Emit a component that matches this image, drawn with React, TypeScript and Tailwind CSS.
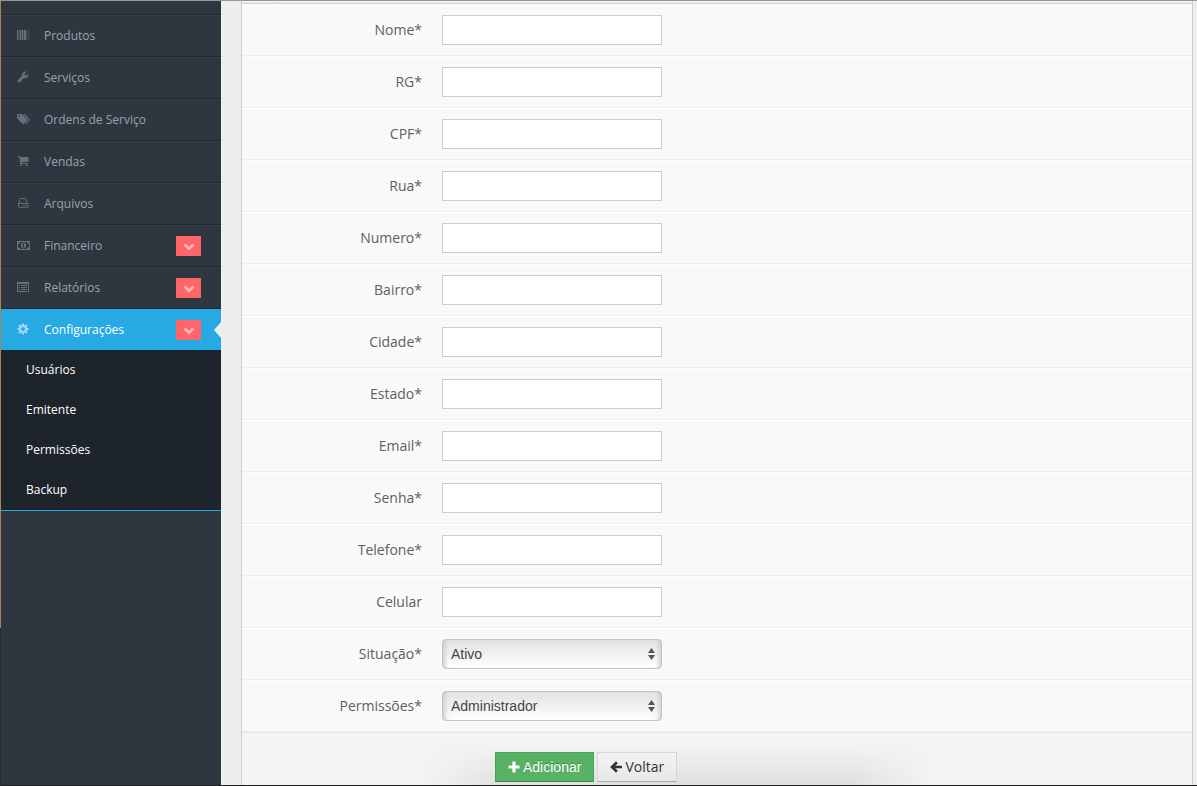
import type { ReactNode } from "react";

type MenuItem = { label: string; icon: ReactNode; dropdown?: boolean };

function BarcodeIcon() {
  return (
    <svg width="12" height="12" viewBox="0 0 12 12" fill="currentColor" shapeRendering="crispEdges">
      <path d="M0 1h1v10H0zM3 1h1v10H3zM5 1h1v10H5zM7 1h2v10H7z" />
      <path d="M1 1h2v10H1zM4 1h1v10H4zM6 1h1v10H6zM9 1h1v10H9zM11 1h1v10h-1z" opacity=".4" />
    </svg>
  );
}

function WrenchIcon() {
  return (
    <svg width="12" height="12" viewBox="0 0 12 12" fill="currentColor">
      <path d="M6.900 7.100 2.800 11.200Q2 11.900 1.200 11.200L.8 10.800Q.1 10 .8 9.200L4.900 5.100Q4.500 2.500 6.300 1.200 7.800.2 9.900.8L7.800 2.400v1.400l1.300.7 2.600-1.400q.3 2-1.100 3.200-1.600 1.400-3.700.8z" />
    </svg>
  );
}

function TagsIcon() {
  return (
    <svg width="13" height="12" viewBox="0 0 13 12" fill="currentColor">
      <path
        fillRule="evenodd"
        d="M0 1.900Q0 1 .9 1h3.300q.8 0 1.400.6l4.700 4.600q.6.600 0 1.200l-3.500 3.500q-.6.600-1.200 0L.9 6.200Q0 5.400 0 4.600zM2.200 2.200a.9.9 0 1 0 0 1.800.9.9 0 0 0 0-1.800z"
      />
      <path d="M6.200 1h.9q.8 0 1.400.6l4.100 4.600q.6.600 0 1.200L9 11q-.6.600-1.200.1l3.500-3.600q.5-.7 0-1.300z" />
    </svg>
  );
}

function CartIcon() {
  return (
    <svg width="12" height="12" viewBox="0 0 12 12" fill="currentColor">
      <path d="M.6 1h2.100l.5 1h8q.4 0 .4.500v3.700q0 .5-.5.500L4.200 7.300l.2.800h6.100v.9H3.300L2.300 2H.6z" />
      <circle cx="4.200" cy="10.300" r="1" />
      <circle cx="9.800" cy="10.300" r="1" />
    </svg>
  );
}

function HddIcon() {
  return (
    <svg width="12" height="12" viewBox="0 0 12 12" fill="none" stroke="currentColor">
      <path d="M1.500 6.500 2.900 2.300Q3.100 1.500 3.900 1.500h4.200q.8 0 1 .8L10.500 6.500h-9Q1.500 6.500 1.500 7v2.500q0 .8.800.8h7.900q.8 0 .8-.8V7q0-.5-.5-.5" />
      <path d="M6.500 8.500h1M8.500 8.500h1" />
    </svg>
  );
}

function MoneyIcon() {
  return (
    <svg width="13" height="12" viewBox="0 0 13 12" fill="currentColor">
      <path
        fillRule="evenodd"
        d="M0 2h13v9H0zM3.200 3Q3 4.700 1 5v3q2 .3 2.200 2h6.600Q10 8.300 12 8V5q-2-.3-2.200-2z"
      />
      <path
        fillRule="evenodd"
        d="M6.500 3.500c1.600 0 2.600 1.300 2.600 3s-1 3-2.600 3-2.600-1.300-2.600-3 1-3 2.600-3zM5.900 4.600l-.9.800.4.600.5-.3v2h-.7v.8h2.600v-.8H7V4.600z"
      />
    </svg>
  );
}

function ListIcon() {
  return (
    <svg width="12" height="12" viewBox="0 0 12 12" fill="none" stroke="currentColor" shapeRendering="crispEdges">
      <path d="M.5 1.500h11v9H.5z" />
      <path d="M0 2.500h12" />
      <path d="M2 4.500h1M4 4.500h6M2 6.500h1M4 6.500h6M2 8.500h1M4 8.500h6" />
    </svg>
  );
}

function GearIcon() {
  return (
    <svg width="12" height="12" viewBox="0 0 12 12" fill="none" stroke="currentColor">
      <circle cx="6" cy="6" r="3" strokeWidth="2.2" />
      <path d="M6 .5v2M6 9.500v2M.5 6h2M9.500 6h2M2 2l1.500 1.500M8.500 8.500 10 10M10 2 8.500 3.500M2 10l1.500-1.500" strokeWidth="2" />
    </svg>
  );
}

function ChevronIcon() {
  return (
    <svg width="12" height="8" viewBox="0 0 12 8" fill="none" stroke="currentColor" strokeWidth="2.800">
      <path d="M1.600 1.600 6 5.700l4.400-4.100" />
    </svg>
  );
}

function PlusIcon() {
  return (
    <svg width="12" height="12" viewBox="0 0 12 12" fill="currentColor">
      <path d="M5 .5h2q.6 0 .6.6v3.300h3.300q.6 0 .6.600v2q0 .6-.6.600H7.600v3.300q0 .6-.6.600H5q-.6 0-.6-.6V7.600H1.100Q.5 7.600.5 7V5q0-.6.600-.6h3.300V1.100Q4.400.5 5 .5z" />
    </svg>
  );
}

function ArrowLeftIcon() {
  return (
    <svg width="12" height="12" viewBox="0 0 12 12" fill="none" stroke="currentColor" strokeWidth="2.600">
      <path d="M6.900 1.200 2 6l4.900 4.800M2.200 6H12" />
    </svg>
  );
}

const menu: MenuItem[] = [
  { label: "Produtos", icon: <BarcodeIcon /> },
  { label: "Serviços", icon: <WrenchIcon /> },
  { label: "Ordens de Serviço", icon: <TagsIcon /> },
  { label: "Vendas", icon: <CartIcon /> },
  { label: "Arquivos", icon: <HddIcon /> },
  { label: "Financeiro", icon: <MoneyIcon />, dropdown: true },
  { label: "Relatórios", icon: <ListIcon />, dropdown: true },
];

const submenu = ["Usuários", "Emitente", "Permissões", "Backup"];

const fields = [
  { id: "nome", label: "Nome*" },
  { id: "rg", label: "RG*" },
  { id: "cpf", label: "CPF*" },
  { id: "rua", label: "Rua*" },
  { id: "numero", label: "Numero*" },
  { id: "bairro", label: "Bairro*" },
  { id: "cidade", label: "Cidade*" },
  { id: "estado", label: "Estado*" },
  { id: "email", label: "Email*", type: "email" },
  { id: "senha", label: "Senha*", type: "password" },
  { id: "telefone", label: "Telefone*" },
  { id: "celular", label: "Celular" },
];

const selects = [
  { id: "situacao", label: "Situação*", options: ["Ativo", "Inativo"] },
  { id: "permissoes", label: "Permissões*", options: ["Administrador"] },
];

function DropdownMark() {
  return (
    <span className="mr-5 flex h-5 w-[25px] items-center justify-center bg-[#ff6669] pt-0.5 text-[#ffb9bb]">
      <ChevronIcon />
    </span>
  );
}

function Sidebar() {
  return (
    <nav className="w-[220px] shrink-0 bg-[#2e363f] text-xs">
      <div className="h-3.5 border-b border-[#1f262d]" />
      <ul>
        {menu.map((item) => (
          <li key={item.label}>
            <a href="#" className="flex h-[42px] items-center border-t border-b border-t-[#37414b] border-b-[#1f262d] text-[#9aa3ad]">
              <span className="ml-4 flex w-[27px] pb-0.5 text-[#66707a]">{item.icon}</span>
              <span className="flex-1">{item.label}</span>
              {item.dropdown && <DropdownMark />}
            </a>
          </li>
        ))}
        <li>
          <a href="#" className="relative flex h-[41px] items-center bg-[#27a9e3] text-white">
            <span className="ml-4 flex w-[27px] pb-0.5 text-[#9edcf7]">
              <GearIcon />
            </span>
            <span className="flex-1">Configurações</span>
            <DropdownMark />
            <span className="absolute top-[13px] right-0 border-y-8 border-r-[7px] border-y-transparent border-r-[#eeeeee]" />
          </a>
          <ul className="border-b border-[#27a9e3] bg-[#1e242b]">
            {submenu.map((label) => (
              <li key={label}>
                <a href="#" className="flex h-10 items-center pl-[25px] text-white">
                  {label}
                </a>
              </li>
            ))}
          </ul>
        </li>
      </ul>
    </nav>
  );
}

function FormRow({ id, label, children }: { id: string; label: string; children: ReactNode }) {
  return (
    <div className="flex items-center gap-5 border-t border-b border-t-white border-b-[#eeeeee] py-2.5">
      <label htmlFor={id} className="w-[180px] text-right leading-5">
        {label}
      </label>
      {children}
    </div>
  );
}

function SelectArrows() {
  return (
    <svg className="pointer-events-none absolute top-[9px] right-[7px]" width="7" height="12" viewBox="0 0 7 12" fill="#555555">
      <path d="M3.500 0 7 5H0zM3.500 12 0 7h7z" />
    </svg>
  );
}

export default function App() {
  return (
    <div className="flex min-h-screen flex-col border-t border-b border-t-[#979797] border-b-[#222222] bg-[#eeeeee] font-['Open_Sans',sans-serif] text-sm text-[#606060]">
      <div className="flex flex-1">
        <div className="flex w-px shrink-0 flex-col">
          <div className="flex-[4] bg-[#a5875c]" />
          <div className="flex-1 bg-[#2a282c]" />
        </div>
        <Sidebar />
        <main className="flex min-w-0 flex-1 pr-1 pl-5">
          <form className="flex flex-1 flex-col border-x border-[#cccccc] bg-[#f9f9f9]" onSubmit={(e) => e.preventDefault()}>
            <div className="flex h-[3px] border-b border-[#cccccc] bg-[#efefef]">
              <span className="w-[31px] border-r border-[#dddddd]" />
            </div>
            {fields.map((field) => (
              <FormRow key={field.id} id={field.id} label={field.label}>
                <input
                  id={field.id}
                  type={field.type ?? "text"}
                  className="h-[30px] w-[220px] border border-[#cccccc] bg-white px-1.5 text-[#555555]"
                />
              </FormRow>
            ))}
            {selects.map((field) => (
              <FormRow key={field.id} id={field.id} label={field.label}>
                <div className="relative">
                  <select
                    id={field.id}
                    className="h-[30px] w-[220px] appearance-none rounded border border-[#c4c4c4] bg-linear-to-b from-[#e2e2e2] to-white px-2 font-['Liberation_Sans',sans-serif] text-[#444444] shadow-[inset_5px_0_4px_-3px_#cccccc,inset_-5px_0_4px_-3px_#cccccc]"
                  >
                    {field.options.map((option) => (
                      <option key={option}>{option}</option>
                    ))}
                  </select>
                  <SelectArrows />
                </div>
              </FormRow>
            ))}
            <div className="relative flex flex-1 items-start gap-[3px] border-t border-[#e5e5e5] bg-[#f4f4f4] pt-[19px] pb-[3px] pl-[253px]">
              <div className="absolute bottom-0 left-[180px] h-11 w-[510px] bg-linear-to-b from-[#f4f4f4] to-[#e0e0e0] [mask-image:linear-gradient(to_right,transparent,black_15%,black_85%,transparent)]" />
              <button
                type="submit"
                className="relative flex h-[30px] items-center gap-[3px] border border-[#4aa355] border-b-[#3c8a47] bg-[#58b266] px-3 font-['Liberation_Sans',sans-serif] text-white [text-shadow:0_-1px_0_rgba(0,0,0,0.25)]"
              >
                <PlusIcon />
                Adicionar
              </button>
              <a
                href="#"
                className="relative flex h-[30px] items-center gap-[3px] border border-[#d5d5d5] border-b-[#aaaaaa] bg-linear-to-b from-[#f3f3f3] to-[#e8e8e8] px-3 text-[#333333]"
              >
                <ArrowLeftIcon />
                Voltar
              </a>
            </div>
          </form>
        </main>
      </div>
    </div>
  );
}
